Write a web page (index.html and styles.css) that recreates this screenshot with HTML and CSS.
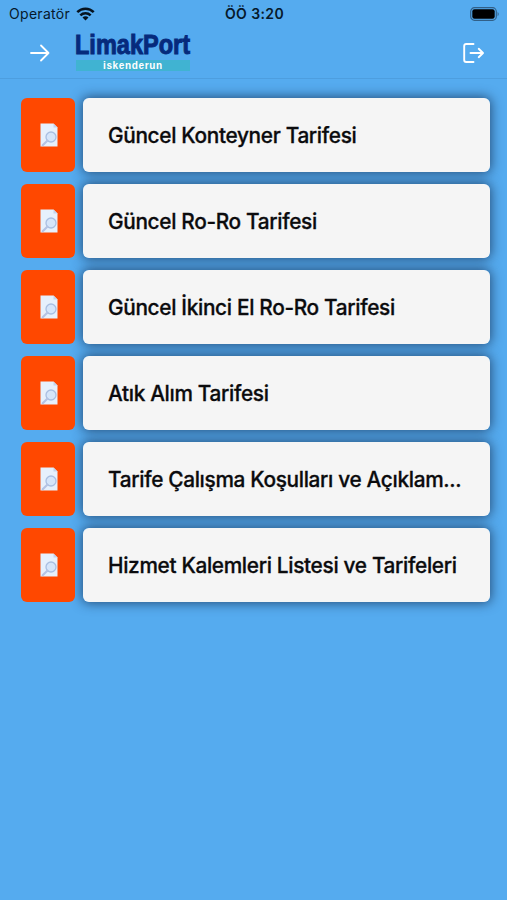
FILE: index.html
```html
<!DOCTYPE html>
<html lang="tr">
<head>
<meta charset="utf-8">
<title>LimakPort İskenderun</title>
<link rel="stylesheet" href="styles.css">
</head>
<body>
<svg class="defs" aria-hidden="true">
  <symbol id="doc" viewBox="0 0 18 24">
    <path d="M.5.5h13l4 4v19H.5z" fill="#e6f0fc"/>
    <path d="M13.5.5v4h4z" fill="#c3d4ec"/>
    <circle cx="11" cy="14" r="5" fill="#d5e5fa" stroke="#a9bfe2" stroke-width="1.3"/>
    <path d="M7.3 17.7l-4.6 4.5" stroke="#b5c3e4" stroke-width="2.2" stroke-linecap="round"/>
  </symbol>
</svg>
<header class="top">
  <div class="status">
    <div class="carrier">
      <span class="operator">Operatör</span>
      <svg class="wifi" viewBox="0 0 20 15"><g fill="none" stroke="#06131f" stroke-width="2.7"><path d="M1.2 5.6a12.4 12.4 0 0 1 17.6 0"/><path d="M4.5 9a7.8 7.8 0 0 1 11 0"/></g><path d="M10 14.5l-3.2-3.3a4.5 4.5 0 0 1 6.4 0z" fill="#06131f"/></svg>
    </div>
    <span class="clock">ÖÖ 3:20</span>
    <svg class="battery" viewBox="0 0 30 14"><rect x=".7" y=".7" width="25.6" height="12.6" rx="3.8" fill="none" stroke="#315f87" stroke-width="1.2"/><rect x="2.3" y="2.3" width="22.4" height="9.4" rx="2.2"/><path d="M27.6 4.7q2.2 2.3 0 4.6z" fill="#315f87"/></svg>
  </div>
  <div class="bar">
    <svg class="arrow" viewBox="0 0 20 18"><path d="M1 9h17.5M11 1.5L18.5 9 11 16.5" fill="none" stroke="#fff" stroke-width="1.8" stroke-linecap="round" stroke-linejoin="round"/></svg>
    <svg class="logo" viewBox="0 0 118 40">
      <rect x="2" y="27" width="114" height="11" fill="#40b3d2"/>
      <text class="brand" x="1" y="21" textLength="115" lengthAdjust="spacingAndGlyphs">LimakPort</text>
      <text class="place" x="29" y="36" textLength="59">iskenderun</text>
    </svg>
    <svg class="exit" viewBox="0 0 22 20"><g fill="none" stroke="#fff" stroke-width="1.9" stroke-linecap="round" stroke-linejoin="round"><path d="M10.5 1H3.2Q1.2 1 1.2 3v14q0 2 2 2h7.3"/><path d="M7.5 10h12.3M15.7 5.8L20 10l-4.3 4.2"/></g></svg>
  </div>
</header>
<main class="list">
  <div class="row"><div class="tile"><svg><use href="#doc"/></svg></div><div class="card"><span class="label">Güncel Konteyner Tarifesi</span></div></div>
  <div class="row"><div class="tile"><svg><use href="#doc"/></svg></div><div class="card"><span class="label">Güncel Ro-Ro Tarifesi</span></div></div>
  <div class="row"><div class="tile"><svg><use href="#doc"/></svg></div><div class="card"><span class="label">Güncel İkinci El Ro-Ro Tarifesi</span></div></div>
  <div class="row"><div class="tile"><svg><use href="#doc"/></svg></div><div class="card"><span class="label">Atık Alım Tarifesi</span></div></div>
  <div class="row"><div class="tile"><svg><use href="#doc"/></svg></div><div class="card"><span class="label">Tarife Çalışma Koşulları ve Açıklam...</span></div></div>
  <div class="row"><div class="tile"><svg><use href="#doc"/></svg></div><div class="card"><span class="label">Hizmet Kalemleri Listesi ve Tarifeleri</span></div></div>
</main>
</body>
</html>
```
FILE: styles.css
```css
* { box-sizing: border-box; }
body {
  margin: 0;
  height: 900px;
  background: #55abef;
  color: #0b0b0d;
  font-family: Inter, "Liberation Sans", sans-serif;
  overflow: hidden;
}
svg { display: block; flex: none; }
.defs { display: none; }
.top { height: 79px; border-bottom: 1px solid #4d9edf; }
.status {
  display: grid;
  grid-template-columns: 1fr auto 1fr;
  align-items: center;
  height: 27px;
  padding: 0 7px 0 9px;
  color: #06192b;
}
.carrier { display: flex; align-items: center; gap: 6px; }
.operator { font-size: 14px; letter-spacing: 0.3px; }
.wifi { width: 19px; height: 14px; }
.clock { font-size: 14px; font-weight: 600; letter-spacing: 0.4px; }
.battery { width: 30px; height: 14px; justify-self: end; }
.bar {
  display: flex;
  align-items: center;
  height: 51px;
  padding: 0 22px 0 30px;
}
.arrow { width: 20px; height: 18px; }
.logo { width: 118px; height: 40px; margin-left: 24px; overflow: visible; }
.brand { font: 700 27px "Liberation Sans", sans-serif; fill: #062a7c; stroke: #062a7c; stroke-width: 1px; }
.place { font: 700 10px "Liberation Sans", sans-serif; fill: #fff; }
.exit { width: 22px; height: 20px; margin-left: auto; }
.list {
  display: grid;
  gap: 12px;
  padding: 19px 17px 0 21px;
}
.row { display: flex; gap: 8px; height: 74px; }
.tile {
  display: flex;
  align-items: center;
  justify-content: center;
  width: 54px;
  border-radius: 6px;
  background: #ff4800;
}
.tile svg { width: 18px; height: 24px; margin-left: 1px; }
.card {
  display: flex;
  flex: 1;
  align-items: center;
  min-width: 0;
  padding: 1px 0 0 25px;
  border-radius: 6px;
  background: #f5f5f5;
  box-shadow: 0 0 12px 1px rgba(22, 45, 80, 0.75);
}
.label {
  font-size: 20.8px;
  font-weight: 500;
  white-space: nowrap;
  letter-spacing: -0.32px;
  -webkit-text-stroke: 0.3px #0b0b0d;
}
/* Card shadows stay beneath every tile and neighbouring card. */
.list { isolation: isolate; }
.card { position: relative; }
.card::before {
  content: "";
  position: absolute;
  inset: 0;
  z-index: -1;
  border-radius: 6px;
  box-shadow: 0 0 12px 1px rgba(22, 45, 80, 0.75);
}
.card { box-shadow: none; }
.tile { position: relative; }
```
